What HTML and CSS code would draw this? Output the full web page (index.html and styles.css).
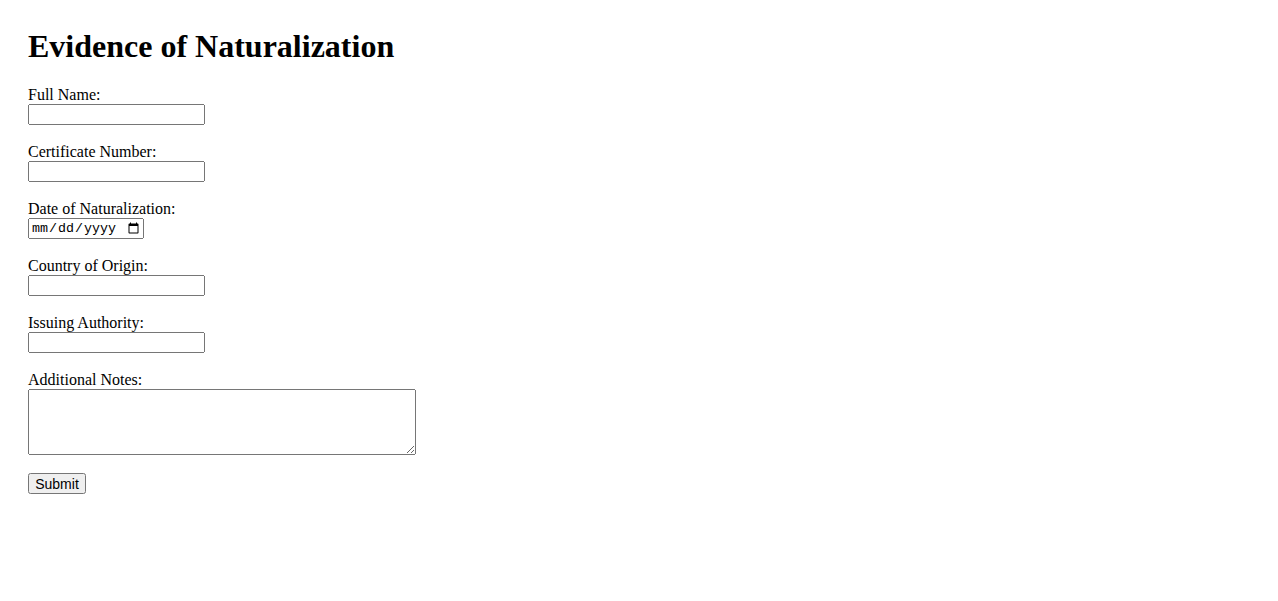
FILE: index.html
```html
<!DOCTYPE html>
<html lang="en">
<head>
  <meta charset="UTF-8" />
  <meta name="viewport" content="width=device-width, initial-scale=1.0">
  <title>Evidence of Naturalization</title>
  <link rel="stylesheet" href="styles.css">
</head>
<body>
  <h1>Evidence of Naturalization</h1>
  <form>
    <label for="fullName">Full Name:</label><br>
    <input type="text" id="fullName" name="fullName"><br><br>

    <label for="certNumber">Certificate Number:</label><br>
    <input type="text" id="certNumber" name="certNumber"><br><br>

    <label for="natDate">Date of Naturalization:</label><br>
    <input type="date" id="natDate" name="natDate"><br><br>

    <label for="country">Country of Origin:</label><br>
    <input type="text" id="country" name="country"><br><br>

    <label for="authority">Issuing Authority:</label><br>
    <input type="text" id="authority" name="authority"><br><br>

    <label for="notes">Additional Notes:</label><br>
    <textarea id="notes" name="notes" rows="4" cols="50"></textarea><br><br>

    <input type="submit" value="Submit">
  </form>
</body>
</html>
```

FILE: styles.css
```css
body { font-family: "Liberation Serif", "Times New Roman", serif; margin: 0; padding: 28px; background: #fff; color: #000; }
h1 { font-size: 32px; margin: 0 0 21px; }
input, textarea { font-family: "Liberation Sans", Arial, sans-serif; font-size: 13.33px; box-sizing: border-box; }
input[type="text"] { width: 177px; height: 21px; }
input[type="date"] { font-family: "Liberation Mono", monospace; width: 116px; height: 21px; }
input[type="submit"] { width: 58px; height: 21px; font-size: 14px; padding: 0; }
textarea { font-family: "Liberation Mono", monospace; width: 388px; height: 66px; vertical-align: bottom; }
```
